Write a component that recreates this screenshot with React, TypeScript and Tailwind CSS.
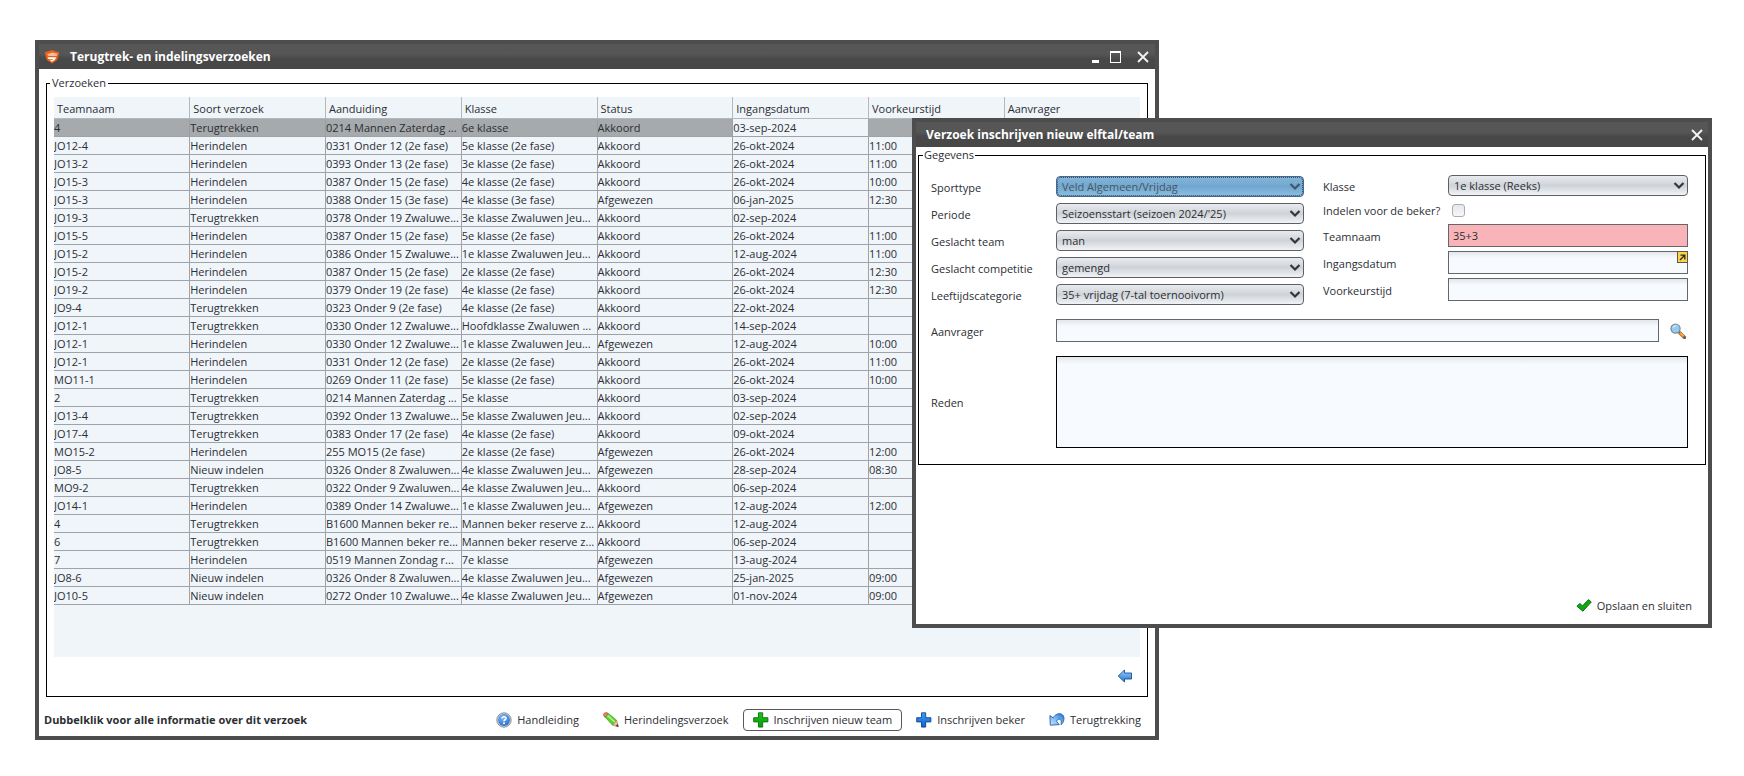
import type { ReactNode } from "react";

const COLUMNS = [
  "Teamnaam",
  "Soort verzoek",
  "Aanduiding",
  "Klasse",
  "Status",
  "Ingangsdatum",
  "Voorkeurstijd",
  "Aanvrager",
];

const DATE_COLUMN = 5;

const ROWS = [
  ["4", "Terugtrekken", "0214 Mannen Zaterdag ...", "6e klasse", "Akkoord", "03-sep-2024", "", ""],
  ["JO12-4", "Herindelen", "0331 Onder 12 (2e fase)", "5e klasse (2e fase)", "Akkoord", "26-okt-2024", "11:00", ""],
  ["JO13-2", "Herindelen", "0393 Onder 13 (2e fase)", "3e klasse (2e fase)", "Akkoord", "26-okt-2024", "11:00", ""],
  ["JO15-3", "Herindelen", "0387 Onder 15 (2e fase)", "4e klasse (2e fase)", "Akkoord", "26-okt-2024", "10:00", ""],
  ["JO15-3", "Herindelen", "0388 Onder 15 (3e fase)", "4e klasse (3e fase)", "Afgewezen", "06-jan-2025", "12:30", ""],
  ["JO19-3", "Terugtrekken", "0378 Onder 19 Zwaluwe...", "3e klasse Zwaluwen Jeu...", "Akkoord", "02-sep-2024", "", ""],
  ["JO15-5", "Herindelen", "0387 Onder 15 (2e fase)", "5e klasse (2e fase)", "Akkoord", "26-okt-2024", "11:00", ""],
  ["JO15-2", "Herindelen", "0386 Onder 15 Zwaluwe...", "1e klasse Zwaluwen Jeu...", "Akkoord", "12-aug-2024", "11:00", ""],
  ["JO15-2", "Herindelen", "0387 Onder 15 (2e fase)", "2e klasse (2e fase)", "Akkoord", "26-okt-2024", "12:30", ""],
  ["JO19-2", "Herindelen", "0379 Onder 19 (2e fase)", "4e klasse (2e fase)", "Akkoord", "26-okt-2024", "12:30", ""],
  ["JO9-4", "Terugtrekken", "0323 Onder 9 (2e fase)", "4e klasse (2e fase)", "Akkoord", "22-okt-2024", "", ""],
  ["JO12-1", "Terugtrekken", "0330 Onder 12 Zwaluwe...", "Hoofdklasse Zwaluwen ...", "Akkoord", "14-sep-2024", "", ""],
  ["JO12-1", "Herindelen", "0330 Onder 12 Zwaluwe...", "1e klasse Zwaluwen Jeu...", "Afgewezen", "12-aug-2024", "10:00", ""],
  ["JO12-1", "Herindelen", "0331 Onder 12 (2e fase)", "2e klasse (2e fase)", "Akkoord", "26-okt-2024", "11:00", ""],
  ["MO11-1", "Herindelen", "0269 Onder 11 (2e fase)", "5e klasse (2e fase)", "Akkoord", "26-okt-2024", "10:00", ""],
  ["2", "Terugtrekken", "0214 Mannen Zaterdag ...", "5e klasse", "Akkoord", "03-sep-2024", "", ""],
  ["JO13-4", "Terugtrekken", "0392 Onder 13 Zwaluwe...", "5e klasse Zwaluwen Jeu...", "Akkoord", "02-sep-2024", "", ""],
  ["JO17-4", "Terugtrekken", "0383 Onder 17 (2e fase)", "4e klasse (2e fase)", "Akkoord", "09-okt-2024", "", ""],
  ["MO15-2", "Herindelen", "255 MO15 (2e fase)", "2e klasse (2e fase)", "Afgewezen", "26-okt-2024", "12:00", ""],
  ["JO8-5", "Nieuw indelen", "0326 Onder 8 Zwaluwen...", "4e klasse Zwaluwen Jeu...", "Afgewezen", "28-sep-2024", "08:30", ""],
  ["MO9-2", "Terugtrekken", "0322 Onder 9 Zwaluwen...", "4e klasse Zwaluwen Jeu...", "Akkoord", "06-sep-2024", "", ""],
  ["JO14-1", "Herindelen", "0389 Onder 14 Zwaluwe...", "1e klasse Zwaluwen Jeu...", "Afgewezen", "12-aug-2024", "12:00", ""],
  ["4", "Terugtrekken", "B1600 Mannen beker re...", "Mannen beker reserve z...", "Akkoord", "12-aug-2024", "", ""],
  ["6", "Terugtrekken", "B1600 Mannen beker re...", "Mannen beker reserve z...", "Akkoord", "06-sep-2024", "", ""],
  ["7", "Herindelen", "0519 Mannen Zondag r...", "7e klasse", "Afgewezen", "13-aug-2024", "", ""],
  ["JO8-6", "Nieuw indelen", "0326 Onder 8 Zwaluwen...", "4e klasse Zwaluwen Jeu...", "Afgewezen", "25-jan-2025", "09:00", ""],
  ["JO10-5", "Nieuw indelen", "0272 Onder 10 Zwaluwe...", "4e klasse Zwaluwen Jeu...", "Afgewezen", "01-nov-2024", "09:00", ""],
];

/* ---------- icons ---------- */

function ShieldIcon() {
  return (
    <svg viewBox="0 0 16 16" className="h-4 w-4">
      <path d="M.8 3.200 8 1l7.200 2.200-.8 3.800-1.200 4L8 14.600 2.800 11 1.600 7Z" fill="#e8601c" />
      <path d="M3 5.200 8.500 3.600l5 1.200L12.600 7H4.500Z" fill="#f7bd98" />
      <path d="M3.600 8.200h8.600L11 10.800l-3 1.900-2.600-1.900h3.400l.6-.9H4.300Z" fill="#fff" />
    </svg>
  );
}

function HelpIcon() {
  return (
    <svg viewBox="0 0 16 16" className="h-4 w-4">
      <defs>
        <radialGradient id="help" cx=".4" cy=".3" r=".8">
          <stop offset="0" stopColor="#7dbbfa" />
          <stop offset="1" stopColor="#1f66c4" />
        </radialGradient>
      </defs>
      <circle cx="8" cy="8" r="7.200" fill="#c9cdd2" stroke="#83888e" strokeWidth=".9" />
      <circle cx="8" cy="8" r="5.900" fill="url(#help)" />
      <path d="M6 6.600C6 4 10.200 4.200 10 6.500 9.900 7.800 8 7.800 8 9.200" fill="none" stroke="#fff" strokeWidth="1.600" />
      <circle cx="8" cy="11.200" r="1" fill="#fff" />
    </svg>
  );
}

function PencilIcon() {
  return (
    <svg viewBox="0 0 16 16" className="h-4 w-4">
      <path d="m.6 3.600.6-2.400L3.800.6l1.500 1.100-3.100 3.700Z" fill="#f0867c" stroke="#c8372c" strokeWidth=".8" />
      <path d="m2.100 5.200 3.300-3.800 8.200 6.800-4 5Z" fill="#5ed02e" stroke="#3b8f22" strokeWidth=".6" />
      <path d="m4.500 3.600 7.700 6.600" stroke="#b6f193" strokeWidth="1.500" />
      <path d="m9.600 13.200 4-5L15.400 14.800Z" fill="#f1c48d" stroke="#9b7446" strokeWidth=".6" />
      <path d="m12.600 14.100 2.200-2.300.7 3.100Z" fill="#4a4440" />
    </svg>
  );
}

function PlusIcon({ color }: { color: "green" | "blue" }) {
  const [light, dark, edge] =
    color === "green" ? ["#1fc51c", "#079a0c", "#08700b"] : ["#3f9df5", "#0f62c9", "#0b4593"];
  return (
    <svg viewBox="0 0 16 16" className="h-4 w-4">
      <defs>
        <linearGradient id={color} x2="0" y2="1">
          <stop offset="0" stopColor={light} />
          <stop offset="1" stopColor={dark} />
        </linearGradient>
      </defs>
      <path
        d="M5.500.800h4.200v4.900h5.200v4.200H9.700v5.200H5.500V9.900H.700V5.700h4.800Z"
        fill={`url(#${color})`}
        stroke={edge}
        strokeWidth=".9"
      />
    </svg>
  );
}

function UndoIcon() {
  return (
    <svg viewBox="0 0 16 16" className="h-4 w-4">
      <defs>
        <linearGradient id="undo" x1="0" y1="1" x2="1" y2="0">
          <stop offset="0" stopColor="#c3e3fd" />
          <stop offset=".5" stopColor="#7db9f3" />
          <stop offset="1" stopColor="#1f6fcd" />
        </linearGradient>
      </defs>
      <path
        d="M.9 3.600 1.300 13.200 10.300 12.600 7.700 9.700C8 7.400 9.800 6.300 11.100 7.300c1.300 1.100 1.400 3.100 1 5.400C15.200 9.900 16 5 13.500 2.800 10.500.4 6.300 2 4.200 5.900Z"
        fill="url(#undo)"
        stroke="#1f5cab"
        strokeWidth=".9"
        strokeLinejoin="round"
      />
    </svg>
  );
}

function BackIcon() {
  return (
    <svg viewBox="0 0 16 16" className="h-4 w-4">
      <defs>
        <linearGradient id="back" x2="0" y2="1">
          <stop offset="0" stopColor="#9fd0fb" />
          <stop offset="1" stopColor="#1e74d4" />
        </linearGradient>
      </defs>
      <path d="M1.200 8 7.500 2v3h7v6h-7v3Z" fill="url(#back)" stroke="#1c4f92" strokeWidth=".9" />
    </svg>
  );
}

function SearchIcon() {
  return (
    <svg viewBox="0 0 16 16" className="h-4 w-4">
      <path d="m9 9 2 2" stroke="#777d84" strokeWidth="2" />
      <path d="m10 10 4.500 4.500" stroke="#6b6660" strokeWidth="3.400" strokeLinecap="round" />
      <path d="m9.800 9.800 3.700 3.700" stroke="#f08a24" strokeWidth="2.800" />
      <path d="m10.500 10 3 3" stroke="#fbd08a" strokeWidth=".9" />
      <circle cx="5.500" cy="5.600" r="4.600" fill="#8fcdf3" stroke="#7f868d" strokeWidth="1.200" />
      <path d="M2.400 5.300a3.200 3.200 0 0 1 5-2.300C5.500 3.300 3.500 4 2.400 5.300Z" fill="#e4f5fe" />
    </svg>
  );
}

function CheckIcon() {
  return (
    <svg viewBox="0 0 16 16" className="h-4 w-4">
      <path
        d="M.9 8.200 3.800 5.400l2.700 2.400L12.500 1.600l2.800 2.400L6.900 13.200Z"
        fill="#10a814"
        stroke="#0a650e"
        strokeWidth=".9"
        strokeLinejoin="round"
      />
    </svg>
  );
}

function CloseIcon() {
  return (
    <svg viewBox="0 0 12 12" className="h-3 w-3">
      <path d="m1 1 10 10M11 1 1 11" stroke="#f4f4f4" strokeWidth="1.800" />
    </svg>
  );
}

/* ---------- window parts ---------- */

function TitleBar({ title, children }: { title: ReactNode; children: ReactNode }) {
  return (
    <header className="flex h-[25px] items-center justify-between bg-linear-to-b from-[#565656] from-40% to-[#484848] to-60% pr-[5px] text-white">
      {title}
      <div className="flex items-center">{children}</div>
    </header>
  );
}

function ToolButton({ icon, label, active }: { icon: ReactNode; label: string; active?: boolean }) {
  return (
    <button
      type="button"
      className={`flex h-[22px] items-center gap-[5px] rounded border px-[9px] whitespace-nowrap ${
        active ? "border-[#55585e]" : "border-transparent"
      }`}
    >
      {icon}
      {label}
    </button>
  );
}

function SelectField({ id, value, focused }: { id: string; value: string; focused?: boolean }) {
  return (
    <div className="relative min-w-0 flex-1">
      <select
        id={id}
        defaultValue={value}
        className={`block h-[21px] w-full appearance-none rounded border pl-[5px] outline-none ${
          focused
            ? "border-[#47698a] bg-linear-to-b from-[#86b5d8] via-[#70a7d0] to-[#8cbfe2] text-[#4a5560]"
            : "border-[#5d6167] bg-linear-to-b from-[#e9ebee] via-[#cfd3d8] to-[#f1f3f5]"
        }`}
      >
        <option>{value}</option>
      </select>
      {focused && (
        <span className="pointer-events-none absolute inset-[1px] rounded-sm border border-dotted border-[#2f4f70]" />
      )}
      <svg viewBox="0 0 12 8" className="pointer-events-none absolute top-[7px] right-[3px] h-2 w-3">
        <path d="m1.500 1 4.500 4.500L10.500 1" fill="none" stroke={focused ? "#42566a" : "#33373c"} strokeWidth="2.200" />
      </svg>
    </div>
  );
}

const INPUT =
  "block h-[23px] w-full rounded-none border border-[#63666b] bg-linear-to-b from-[#e3e7eb] to-[#f7fbff] to-30% px-1 outline-none";

function Field({ id, label, row, children }: { id: string; label: string; row: string; children: ReactNode }) {
  return (
    <div className={`flex items-center ${row}`}>
      <label htmlFor={id} className="w-[125px] shrink-0 pt-[2px] whitespace-nowrap">
        {label}
      </label>
      {children}
    </div>
  );
}

/* ---------- windows ---------- */

function RequestsTable() {
  return (
    <div className="bg-[#f0f5fa] pb-[52px]">
      <table className="w-full table-fixed border-collapse text-left">
        <thead>
          <tr className="h-[21px] border-b border-[#b4b8bd]">
            {COLUMNS.map((c) => (
              <th key={c} className="border-r border-[#b4b8bd] p-0 pt-[3px] pl-[3px] font-normal last:border-r-0">
                {c}
              </th>
            ))}
          </tr>
        </thead>
        <tbody>
          {ROWS.map((cells, i) => (
            <tr key={i} className="h-[18px] border-b border-[#9fa3a9]">
              {cells.map((text, j) => (
                <td
                  key={j}
                  className={`overflow-hidden border-r p-0 leading-[17px] whitespace-nowrap last:border-r-0 ${
                    i === 0 && j !== DATE_COLUMN ? "border-[#9b9fa1] bg-[#a6aaac]" : "border-[#9fa3a9]"
                  }`}
                >
                  {text}
                </td>
              ))}
            </tr>
          ))}
        </tbody>
      </table>
    </div>
  );
}

function RequestsWindow() {
  return (
    <section className="mr-[585px] ml-[35px] border-4 border-[#4d4d4d] bg-white">
      <TitleBar
        title={
          <h1 className="flex items-center gap-[10px] pl-[5px] text-[12px] font-bold">
            <ShieldIcon />
            Terugtrek- en indelingsverzoeken
          </h1>
        }
      >
        <button type="button" aria-label="Minimaliseren" className="flex h-3 w-[7px] items-end">
          <span className="h-[3px] w-full bg-white" />
        </button>
        <button
          type="button"
          aria-label="Maximaliseren"
          className="mr-4 ml-[11px] h-3 w-[11px] border border-t-2 border-white"
        />
        <button type="button" aria-label="Sluiten" className="pr-px">
          <CloseIcon />
        </button>
      </TitleBar>
      <div className="px-[7px] pt-[6px]">
        <fieldset className="border border-black px-[7px]">
          <legend className="-ml-1 px-[2px] leading-4">Verzoeken</legend>
          <div className="pt-[6px]">
            <RequestsTable />
          </div>
          <div className="flex h-[39px] items-center justify-end pr-[7px]">
            <button type="button" aria-label="Terug">
              <BackIcon />
            </button>
          </div>
        </fieldset>
      </div>
      <footer className="flex h-[39px] items-center justify-between pt-2 pr-1 pl-[5px]">
        <p className="font-bold">Dubbelklik voor alle informatie over dit verzoek</p>
        <div className="flex gap-1">
          <ToolButton icon={<HelpIcon />} label="Handleiding" />
          <ToolButton icon={<PencilIcon />} label="Herindelingsverzoek" />
          <ToolButton icon={<PlusIcon color="green" />} label="Inschrijven nieuw team" active />
          <ToolButton icon={<PlusIcon color="blue" />} label="Inschrijven beker" />
          <ToolButton icon={<UndoIcon />} label="Terugtrekking" />
        </div>
      </footer>
    </section>
  );
}

function NewTeamDialog() {
  return (
    <section
      role="dialog"
      aria-labelledby="dialog-title"
      className="absolute top-[118px] right-8 left-[912px] border-4 border-[#4d4d4d] bg-white"
    >
      <TitleBar
        title={
          <h2 id="dialog-title" className="pl-[10px] text-[12px] font-bold">
            Verzoek inschrijven nieuw elftal/team
          </h2>
        }
      >
        <button type="button" aria-label="Sluiten">
          <CloseIcon />
        </button>
      </TitleBar>
      <form className="px-[2px]">
        <fieldset className="border border-black pr-[17px] pb-4 pl-3">
          <legend className="-ml-2 px-[1px] leading-4">Gegevens</legend>
          <div className="grid grid-cols-[373fr_365fr] gap-x-[19px] pt-[10px]">
            <div>
              <Field id="sporttype" label="Sporttype" row="h-[27px]">
                <SelectField id="sporttype" value="Veld Algemeen/Vrijdag" focused />
              </Field>
              <Field id="periode" label="Periode" row="h-[27px]">
                <SelectField id="periode" value="Seizoensstart (seizoen 2024/'25)" />
              </Field>
              <Field id="geslacht-team" label="Geslacht team" row="h-[27px]">
                <SelectField id="geslacht-team" value="man" />
              </Field>
              <Field id="geslacht-competitie" label="Geslacht competitie" row="h-[27px]">
                <SelectField id="geslacht-competitie" value="gemengd" />
              </Field>
              <Field id="leeftijd" label="Leeftijdscategorie" row="h-[27px]">
                <SelectField id="leeftijd" value="35+ vrijdag (7-tal toernooivorm)" />
              </Field>
            </div>
            <div>
              <Field id="klasse" label="Klasse" row="h-[25px]">
                <SelectField id="klasse" value="1e klasse (Reeks)" />
              </Field>
              <Field id="beker" label="Indelen voor de beker?" row="h-6">
                <input
                  id="beker"
                  type="checkbox"
                  className="ml-1 h-[13px] w-[13px] appearance-none rounded-[3px] border border-[#a9adb3] bg-linear-to-b from-[#e4e6ea] to-[#f6f7f9]"
                />
              </Field>
              <Field id="teamnaam" label="Teamnaam" row="h-[27px]">
                <input
                  id="teamnaam"
                  defaultValue="35+3"
                  className="block h-[23px] w-full rounded-none border border-[#63666b] bg-[#f8b4b8] px-1 outline-none"
                />
              </Field>
              <Field id="ingangsdatum" label="Ingangsdatum" row="h-[27px]">
                <div className="relative flex-1">
                  <input id="ingangsdatum" className={INPUT} />
                  <button
                    type="button"
                    aria-label="Datum kiezen"
                    className="absolute top-0 right-0 flex h-3 w-[11px] items-center justify-center border border-[#5c5843] bg-[#fbd34d]"
                  >
                    <svg viewBox="0 0 7 7" className="h-[7px] w-[7px]">
                      <path d="M1.500 1.200h4.300v4.300M5.500 1.500 1 6" fill="none" stroke="#2f2a12" strokeWidth="1.300" />
                    </svg>
                  </button>
                </div>
              </Field>
              <Field id="voorkeurstijd" label="Voorkeurstijd" row="h-[27px]">
                <input id="voorkeurstijd" className={INPUT} />
              </Field>
            </div>
          </div>
          <Field id="aanvrager" label="Aanvrager" row="mt-[9px] h-[27px]">
            <input id="aanvrager" className={INPUT} />
            <button type="button" aria-label="Zoeken" className="mr-[2px] ml-[11px]">
              <SearchIcon />
            </button>
          </Field>
          <Field id="reden" label="Reden" row="mt-3">
            <textarea
              id="reden"
              className="block h-[92px] w-full resize-none rounded-none border border-black bg-linear-to-b from-[#e3e7eb] to-[#f7fbff] to-8% px-1 outline-none"
            />
          </Field>
        </fieldset>
        <div className="flex justify-end pt-[130px] pr-1 pb-[7px]">
          <ToolButton icon={<CheckIcon />} label="Opslaan en sluiten" />
        </div>
      </form>
    </section>
  );
}

export default function App() {
  return (
    <main className="relative min-h-screen bg-white py-10 font-['Open_Sans',sans-serif] text-[11px] leading-4 text-[#2b2e33]">
      <RequestsWindow />
      <NewTeamDialog />
    </main>
  );
}
